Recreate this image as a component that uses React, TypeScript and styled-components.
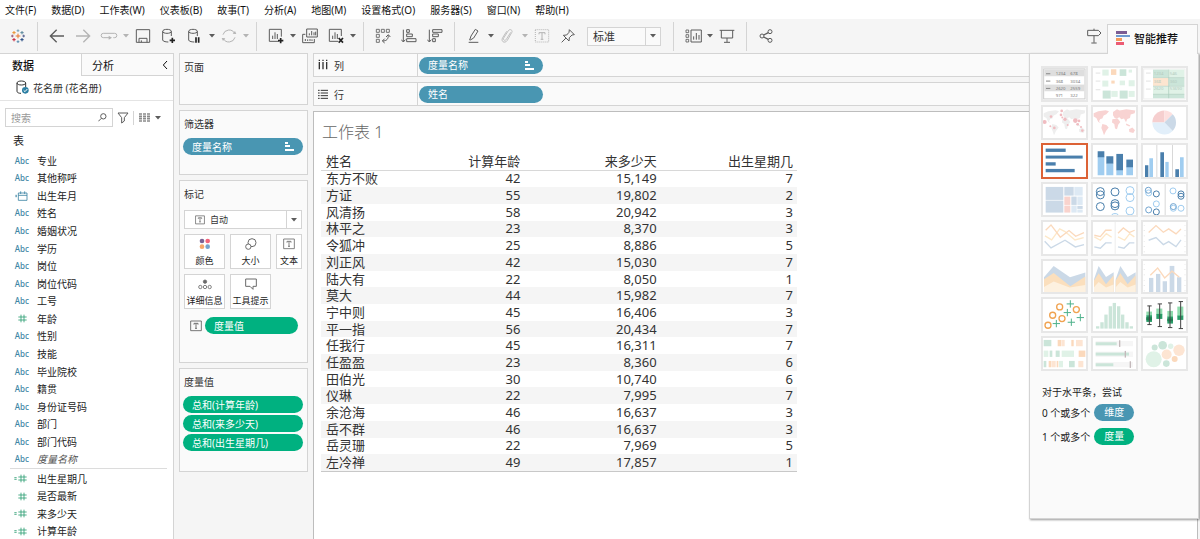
import React from "react";
import styled, { createGlobalStyle, css } from "styled-components";

const color = {
  chrome: "#f5f5f5",
  panel: "#fafafa",
  line: "#d4d4d4",
  text: "#333333",
  icon: "#5c5c5c",
  muted: "#b4b4b4",
  blue: "#4996b2",
  green: "#00b180",
};

const Global = createGlobalStyle`
  * { box-sizing: border-box; }
  body { margin: 0; background: #fff; }
  body, button, input, select {
    font-family: "Noto Sans", "Noto Sans CJK SC", sans-serif;
    font-size: 10px;
    color: ${color.text};
  }
  button { padding: 0; border: 0; background: none; cursor: pointer; }
  ul { list-style: none; margin: 0; padding: 0; }
  h1, h2, p { margin: 0; font-weight: 400; }
  svg { display: block; flex: none; }
`;

const Shell = styled.div`
  display: flex;
  flex-direction: column;
  height: 100vh;
  overflow: hidden;
`;

/* ---------- menu bar ---------- */

const MenuBar = styled.nav`
  display: flex;
  gap: 15px;
  height: 19px;
  padding-left: 5px;
  flex: none;
`;

const MenuButton = styled.button`
  line-height: 20px;
  color: #111;
  white-space: nowrap;
`;

/* ---------- toolbar ---------- */

const Toolbar = styled.div`
  display: flex;
  align-items: center;
  height: 34px;
  padding: 0 2px 0 5px;
  background: ${color.chrome};
  flex: none;
`;

const ToolButton = styled.button<{ $off?: boolean }>`
  display: flex;
  align-items: center;
  justify-content: center;
  width: 26px;
  height: 26px;
  flex: none;
  color: ${(p) => (p.$off ? color.muted : color.icon)};
`;

const CaretButton = styled(ToolButton)`
  width: 8px;
`;

const Separator = styled.span`
  width: 1px;
  height: 29px;
  margin: 0 6px;
  background: ${color.line};
  flex: none;
`;

const Spacer = styled.span`
  flex: 1;
`;

const FitField = styled.label`
  display: flex;
  align-items: center;
  width: 74px;
  height: 19px;
  margin: 0 6px;
  border: 1px solid ${color.line};
  background: ${color.panel};
  flex: none;
`;

const PlainSelect = styled.select`
  flex: 1;
  min-width: 0;
  height: 17px;
  padding: 0 0 0 5px;
  border: 0;
  background: none;
  appearance: none;
  font-size: 11px;
`;

const SelectArrow = styled.span`
  display: flex;
  align-items: center;
  justify-content: center;
  align-self: stretch;
  width: 15px;
  border-left: 1px solid ${color.line};
  color: ${color.icon};
`;

const ShowMeTab = styled.button`
  position: relative;
  z-index: 2;
  display: flex;
  align-items: center;
  align-self: flex-end;
  gap: 4px;
  width: 91px;
  height: 30px;
  margin-bottom: -1px;
  padding: 0 0 4px 8px;
  border: 1px solid ${color.line};
  border-bottom: 0;
  background: ${color.panel};
  font-size: 11px;
  font-weight: 500;
  color: #111;
`;

/* ---------- body ---------- */

const Body = styled.div`
  position: relative;
  display: flex;
  flex: 1;
  min-height: 0;
  background: ${color.chrome};
`;

const Sidebar = styled.aside`
  width: 174px;
  flex: none;
  overflow: hidden;
  border: solid ${color.line};
  border-width: 1px 1px 0 0;
  background: #fff;
`;

const TabRow = styled.div`
  display: flex;
  height: 22px;
`;

const SideTab = styled.button<{ $active?: boolean }>`
  display: flex;
  align-items: center;
  justify-content: space-between;
  padding: 0 5px 0 12px;
  font-size: 11px;
  color: #111;
  ${(p) =>
    p.$active
      ? css`
          width: 81px;
          font-weight: 500;
        `
      : css`
          flex: 1;
          padding-left: 10px;
          border: solid ${color.line};
          border-width: 0 0 1px 1px;
          background: ${color.panel};
        `}
`;

const SourceRow = styled.button`
  display: flex;
  align-items: center;
  gap: 4px;
  width: 100%;
  height: 25px;
  padding: 0 0 2px 16px;
  border-bottom: 1px solid #e4e4e4;
`;

const SearchRow = styled.div`
  display: flex;
  align-items: center;
  gap: 4px;
  height: 19px;
  margin: 7px 0 0 5px;
`;

const SearchBox = styled.label`
  display: flex;
  align-items: center;
  width: 108px;
  height: 19px;
  padding-right: 5px;
  border: 1px solid ${color.line};
  color: ${color.icon};
`;

const SearchInput = styled.input`
  flex: 1;
  min-width: 0;
  height: 17px;
  padding: 0 5px;
  border: 0;
  outline: 0;
  background: none;
  &::placeholder { color: #999; }
`;

const SmallButton = styled.button<{ $ruled?: boolean }>`
  display: flex;
  align-items: center;
  height: 14px;
  color: ${color.icon};
  ${(p) =>
    p.$ruled &&
    css`
      padding-left: 5px;
      border-left: 1px solid ${color.line};
      color: #8a8a8a;
    `}
`;

const GroupTitle = styled.h2`
  height: 25px;
  padding-left: 13px;
  font-size: 11px;
  line-height: 28px;
  color: #222;
`;

const FieldList = styled.ul<{ $height: number }>`
  display: flex;
  flex-direction: column;
  height: ${(p) => p.$height}px;
`;

const FieldItem = styled.li<{ $italic?: boolean }>`
  display: flex;
  align-items: center;
  flex: 1;
  min-height: 0;
  line-height: 16px;
  color: ${(p) => (p.$italic ? "#555" : "#222")};
  font-style: ${(p) => (p.$italic ? "italic" : "normal")};
`;

const FieldMark = styled.span<{ $measure?: boolean }>`
  display: flex;
  justify-content: flex-end;
  width: 37px;
  padding-right: ${(p) => (p.$measure ? 10 : 8)}px;
  font-size: 8px;
  font-style: normal;
  font-weight: 500;
  color: ${(p) => (p.$measure ? "#2f9f74" : "#3f86a5")};
`;

const FieldRule = styled.hr`
  height: 1px;
  margin: 0 6px 1px 10px;
  border: 0;
  background: #dcdcdc;
`;

/* ---------- cards ---------- */

const CardColumn = styled.div`
  display: flex;
  flex-direction: column;
  gap: 5px;
  width: 139px;
  padding: 0 5px;
  flex: none;
`;

const Card = styled.section<{ $min: number }>`
  min-height: ${(p) => p.$min}px;
  padding: 6px 4px 0 3px;
  border: 1px solid ${color.line};
  background: ${color.panel};
`;

const CardTitle = styled.h2`
  margin-bottom: 7px;
  padding-left: 1px;
  font-size: 10px;
  line-height: 14px;
`;

const PillStack = styled.div`
  display: flex;
  flex-direction: column;
  gap: 2px;
`;

const Pill = styled.button<{ $measure?: boolean; $width?: number }>`
  display: flex;
  align-items: center;
  justify-content: space-between;
  width: ${(p) => (p.$width ? `${p.$width}px` : "100%")};
  height: 17px;
  padding: 0 9px;
  border-radius: 9px;
  line-height: 16px;
  color: #fff;
  background: ${(p) => (p.$measure ? color.green : color.blue)};
`;

const Marks = styled.div`
  display: flex;
  flex-direction: column;
  gap: 5px;
  margin: 9px 1px 0;
`;

const MarkType = styled.label`
  display: flex;
  align-items: center;
  height: 19px;
  padding-left: 10px;
  border: 1px solid ${color.line};
  background: #fff;
  color: ${color.icon};
`;

const MarkTypeSelect = styled(PlainSelect)`
  font-size: 9px;
`;

const MarkGrid = styled.div`
  display: grid;
  grid-template-columns: 41px 41px 1fr;
  gap: 5px;
`;

const MarkButton = styled.button`
  display: flex;
  flex-direction: column;
  align-items: center;
  justify-content: space-between;
  height: 35px;
  padding: 3px 0 1px;
  border: 1px solid ${color.line};
  background: #fff;
  font-size: 9px;
  line-height: 12px;
  white-space: nowrap;
  color: #222;

  svg { color: #6a6a6a; }
`;

const MarkPillRow = styled.div`
  display: flex;
  align-items: center;
  gap: 3px;
  padding: 3px 0 0 6px;
  color: ${color.icon};
`;

/* ---------- shelves and sheet ---------- */

const Main = styled.main`
  display: flex;
  flex-direction: column;
  gap: 5px;
  flex: 1;
  min-width: 0;
  margin-right: 2px;
`;

const Shelf = styled.div`
  display: flex;
  align-items: center;
  height: 24px;
  border: 1px solid ${color.line};
  background: ${color.panel};
  flex: none;
`;

const ShelfLabel = styled.div`
  display: flex;
  align-items: center;
  align-self: stretch;
  gap: 6px;
  width: 104px;
  margin-right: 1px;
  padding-left: 4px;
  border-right: 1px solid ${color.line};
`;

const Sheet = styled.div`
  flex: 1;
  padding: 8px 7px 0;
  border: 1px solid #bdbdbd;
  border-bottom: 0;
  background: #fff;
`;

const SheetTitle = styled.h1`
  padding-left: 1px;
  font-size: 16px;
  line-height: 24px;
  font-weight: 300;
  color: #666;
`;

const DataTable = styled.table`
  width: 476px;
  height: 318px;
  margin-top: 10px;
  border-collapse: collapse;
  table-layout: fixed;
  border-bottom: 1px solid #c8c8c8;
  font-size: 13px;
  line-height: 15px;

  thead tr { height: 16px; border-bottom: 1px solid #d8d8d8; }
  tbody tr:nth-child(even) { background: #f5f5f5; }
`;

const Cell = styled.td`
  padding: 0 4px;
  text-align: right;
`;

const HeadCell = styled.th`
  padding: 0 4px;
  text-align: right;
  font-weight: 400;
  &:first-child { width: 67px; padding-left: 5px; text-align: left; }
`;

const RowHead = styled.th`
  padding: 0 0 0 5px;
  text-align: left;
  font-weight: 400;
  white-space: nowrap;
`;

/* ---------- recommendation panel ---------- */

const ShowMePanel = styled.aside`
  position: absolute;
  top: 0;
  right: 1px;
  width: 170px;
  padding: 12px 11px 73px;
  border: 1px solid ${color.line};
  background: ${color.panel};
  box-shadow: 1px 1px 2px rgba(0, 0, 0, 0.4);
`;

const ChartGrid = styled.div`
  display: grid;
  grid-template-columns: repeat(3, 47px);
  grid-template-rows: repeat(8, 1fr);
  gap: 3px;
  height: 305px;
  margin-bottom: 12px;
`;

const ChartButton = styled.button<{ $selected?: boolean }>`
  display: flex;
  min-height: 0;
  border: 2px solid ${(p) => (p.$selected ? "#dc6236" : "#e7e7e7")};
  background: #fff;

  svg { width: 100%; height: 100%; }
`;

const Hint = styled.p`
  line-height: 18px;
  margin-bottom: 3px;
  padding-left: 1px;
  color: #222;
`;

const HintRow = styled.p`
  display: flex;
  align-items: center;
  gap: 4px;
  height: 17px;
  margin-bottom: 7px;
  padding-left: 1px;
  white-space: nowrap;
  color: #222;
  &:last-child { margin-bottom: 0; }
`;

const Tag = styled.span<{ $measure?: boolean }>`
  width: 40px;
  height: 17px;
  border-radius: 9px;
  line-height: 16px;
  text-align: center;
  color: #fff;
  background: ${(p) => (p.$measure ? color.green : color.blue)};
`;

/* ---------- icons ---------- */

type IconProps = { w?: number; h?: number; sw?: number; children: React.ReactNode };

/* Line icons are drawn on a grid three units to the pixel. */
const Icon = ({ w = 16, h = 16, sw = 3, children }: IconProps) => (
  <svg width={w} height={h} viewBox={`0 0 ${w * 3} ${h * 3}`} fill="none" stroke="currentColor" strokeWidth={sw}>
    {children}
  </svg>
);

const Caret = () => (
  <svg width="6" height="4" viewBox="0 0 6 4" fill="currentColor">
    <path d="M0 0h6L3 3.5z" />
  </svg>
);

const plus = (x: number, y: number, r: number) => `M${x - r} ${y}h${2 * r}M${x} ${y - r}v${2 * r}`;

const Logo = () => (
  <Icon sw={3}>
    <path d={plus(24, 24, 7)} stroke="#e8762d" />
    <path d={plus(24, 8, 4)} stroke="#7aa3b5" />
    <path d={plus(24, 41, 4)} stroke="#5c8fb0" />
    <path d={plus(7, 24, 4)} stroke="#9a5c7c" />
    <path d={plus(41, 24, 4)} stroke="#5b6591" />
    <path d={plus(12, 14, 5)} stroke="#eb912c" />
    <path d={plus(36, 14, 5)} stroke="#59879b" />
    <path d={plus(12, 35, 5)} stroke="#c72037" />
    <path d={plus(36, 35, 5)} stroke="#1f447e" />
  </Icon>
);

const Back = () => <Icon sw={4}><path d="M45 24H5M23 5L4 24l19 19" /></Icon>;
const Forward = () => <Icon sw={4}><path d="M3 24h40M25 5l19 19-19 19" /></Icon>;
const Replay = () => (
  <Icon w={18}><path d="M40 29h4a6 6 0 0 0 0-13H10a6 6 0 0 0 0 13h20" /><path d="M26 23l10 6-10 6z" fill="currentColor" stroke="none" /></Icon>
);
const Save = () => (
  <Icon><path d="M4 5h40v38H4zM12 43V31h24v12M19 43v-6" /></Icon>
);
const cylinder = "M5 10v26c0 5 13 6 17 6M31 10v14M5 10c0-8 26-8 26 0s-26 8-26 0";
const DbPlus = () => <Icon><path d={cylinder} /><path d={plus(34, 37, 8)} stroke="#222" strokeWidth="5" /></Icon>;
const DbPause = () => <Icon><path d={cylinder} /><path d="M27 28v16M35 28v16" stroke="#222" strokeWidth="5" /></Icon>;
const Refresh = () => (
  <Icon>
    <path d="M6 20A19 19 0 0 1 41 16M42 28A19 19 0 0 1 7 32" />
    <path d="M35 17l11 1-4-9zM13 31L2 30l4 9z" fill="currentColor" stroke="none" />
  </Icon>
);
const bars = "M14 33V23M21 33V13M28 33V18";
const ChartPlus = () => (
  <Icon><path d="M32 40H4V4h36v22" /><path d={bars} /><path d={plus(38, 38, 8)} stroke="#222" strokeWidth="5" /></Icon>
);
const ChartClear = () => (
  <Icon><path d="M30 40H4V4h36v20" /><path d={bars} /><path d="M32 30l13 14M45 30L32 44" stroke="#222" strokeWidth="5" /></Icon>
);
const ChartCopy = () => (
  <Icon><path d="M14 3h32v24H14zM22 22v-6M29 22V9M36 22v-9M41 22V11" /><path d="M10 19H2v25h35v-11M10 39v-6M17 39v-5M24 39v-6M30 39v-5" /></Icon>
);
const Swap = () => (
  <Icon>
    <path d="M4 4h9v9H4zM19 4h9v9h-9zM34 4h9v9h-9zM4 19h9v9H4zM4 34h9v9H4z" strokeWidth="2.5" />
    <path d="M23 39c12 0 17-6 17-17M29 32l-7 7 7 6M33 27l7-7 6 7" />
  </Icon>
);
const SortUp = () => (
  <Icon><path d="M7 5v36M1 35l6 7 6-7M17 5h8v8h-8zM17 18h17v8H17zM17 32h28v9H17z" /></Icon>
);
const SortDown = () => (
  <Icon><path d="M7 5v36M1 35l6 7 6-7M17 5h28v8H17zM17 18h17v8H17zM17 32h8v9h-8z" /></Icon>
);
const Pen = () => (
  <Icon><path d="M11 36l4-12L28 4l8 5-13 21-10 6zM8 43h29" /></Icon>
);
const Clip = () => (
  <Icon><path d="M32 13L19 34c-4 6-11 2-8-4L25 8c5-7 15-1 10 6L22 37c-7 11-21 4-14-8L20 10" strokeWidth="2.5" /></Icon>
);
const TextFrame = () => (
  <Icon><path d="M4 5h40v37H4z" strokeDasharray="3 3" /><path d="M15 19v-5h18v5M24 14v20M20 34h8" /></Icon>
);
const Pin = () => (
  <Icon><path d="M28 5l15 15-7 1-8 8-1 10L10 22l10-1 7-8zM18 30L5 43" /></Icon>
);
const Viewer = () => (
  <Icon w={17}><path d="M18 6h31v36H18zM26 35V25M34 35V15M42 35V21" /><path d="M3 6h8v8H3zM3 20h8v8H3zM3 34h8v8H3z" strokeWidth="2.5" /></Icon>
);
const Present = () => <Icon><path d="M2 7h44M7 7v23h34V7M24 30v12M15 43h18" /></Icon>;
const Share = () => (
  <Icon><circle cx="12" cy="24" r="6" /><circle cx="36" cy="11" r="6" /><circle cx="36" cy="37" r="6" /><path d="M17 21l14-7M17 27l14 7" strokeWidth="4" /></Icon>
);
const Signpost = () => <Icon><path d="M5 7h32l8 8-8 8H5zM24 2v5M24 23v21M16 45h16" /></Icon>;
const ShowMeLogo = () => (
  <svg width="14" height="14" viewBox="0 0 14 14">
    <path d="M0 0h11v3H0z" fill="#7b5d94" /><path d="M0 4h14v2H0z" fill="#6f9bd1" />
    <path d="M0 7h6v3H0z" fill="#f39a5b" /><path d="M0 11h8v3H0z" fill="#ec5b74" />
  </svg>
);
const DataSource = () => (
  <Icon w={13} h={14}>
    <path d="M3 9v25c0 4 6 6 12 6M29 9v12M3 9C3 1 29 1 29 9s-26 8-26 0" />
    <circle cx="28" cy="31" r="10" fill="#2c7fa3" stroke="none" /><path d="M23 31l4 4 7-8" stroke="#fff" />
  </Icon>
);
const Search = () => <Icon w={9} h={9}><circle cx="16" cy="10" r="8" /><path d="M10 16L1 25" /></Icon>;
const Funnel = () => <Icon w={12} h={12}><path d="M3 3h30L22 17v10l-8 6V17z" /></Icon>;
const ListGrid = () => (
  <Icon w={11} h={9}><path d="M0 3h33M0 10h33M0 17h33M0 24h33" strokeWidth="5" strokeDasharray="9 3" /></Icon>
);
const ChevronLeft = () => <Icon w={6} h={10}><path d="M15 3L4 15l11 12" /></Icon>;
const Hash = () => <Icon w={9} h={9} sw={2.5}><path d="M9 2v23M18 2v23M1 9h25M1 18h25" /></Icon>;
const CalcHash = () => <Icon w={13} h={9} sw={2.5}><path d="M21 2v23M30 2v23M13 9h25M13 18h25" /><path d="M1 11h7M1 16h7" /></Icon>;
const Calendar = () => (
  <Icon w={14} h={10} sw={2.5}><path d="M10 6h26v22H10zM10 13h26M17 1v8M29 1v8" /><path d="M1 13h5M1 17h5" /></Icon>
);
const TextMark = ({ size = 12 }: { size?: number }) => (
  <svg width={size} height={size} viewBox="0 0 36 36" fill="none" stroke="currentColor" strokeWidth="2.5">
    <path d="M2 3h32v29H2zM12 14v-4h12v4M18 10v15M15 25h6" />
  </svg>
);
const Dots = () => (
  <svg width="12" height="12" viewBox="0 0 36 36">
    <circle cx="9" cy="9" r="7" fill="#7b6294" /><circle cx="26" cy="9" r="7" fill="#f2637b" />
    <circle cx="9" cy="26" r="7" fill="#f5a66a" /><circle cx="26" cy="26" r="7" fill="#77a2cb" />
  </svg>
);
const Size = () => <Icon w={12} h={12}><circle cx="21" cy="14" r="12" /><circle cx="10" cy="26" r="8" fill="#fff" /></Icon>;
const Detail = () => (
  <Icon w={14} h={12} sw={2.5}><circle cx="21" cy="11" r="5" fill="currentColor" /><circle cx="7" cy="27" r="5" /><circle cx="21" cy="27" r="5" /><circle cx="35" cy="27" r="5" /></Icon>
);
const Tooltip = () => <Icon w={12} h={12}><path d="M2 3h32v22H24v9l-9-9H2z" /></Icon>;
const SortMark = () => (
  <svg width="9" height="9" viewBox="0 0 9 9" fill="#fff"><path d="M0 0h3v2H0zM0 3h5v2H0zM0 7h9v2H0z" /></svg>
);
const ColumnsIcon = () => (
  <Icon w={10} h={12} sw={4}><path d="M4 2v4M15 2v4M26 2v4M4 9v22M15 9v22M26 9v22" /></Icon>
);
const RowsIcon = () => (
  <Icon w={10} h={10} sw={4}><path d="M0 4h5M0 12h5M0 20h5M0 28h5M8 4h22M8 12h22M8 20h22M8 28h22" strokeWidth="3" /></Icon>
);

/* ---------- chart thumbnails ---------- */

const R = ({ f, d }: { f: string; d: number[][] }) => (
  <g fill={f}>{d.map(([x, y, w, h], i) => <rect key={i} x={x} y={y} width={w} height={h} />)}</g>
);
const C = ({ s, r, d, w = 3 }: { s: string; r: number; d: number[][]; w?: number }) => (
  <g stroke={s} strokeWidth={w} fill="none">{d.map(([x, y], i) => <circle key={i} cx={x} cy={y} r={r} />)}</g>
);
const L = ({ s, d, w = 3 }: { s: string; d: string; w?: number }) => <path d={d} stroke={s} strokeWidth={w} fill="none" />;

const pb = "#cbd9e7", po = "#fbd9bc", py = "#fde8c9", pg = "#cbe5d9", plg = "#e0f2e7", lb = "#a0cdf0", db = "#4a7fac";

const continents =
  "M8 24l14-6 22-3 10 3-8 9-8 4-4 9-6 1-4 7 5 5-7-3-6-12-8-4zM34 56l12 3 7 8-8 10-6 13-4-12-4-10zM66 20l12-8 8 4 20-4 27 4-2 8-12 4-2 10-8 3-4 10-6-11-8 2-6-6-8 4-6-2-5-8zM64 42l16-2 8 10-6 8-4 14-6-2-2-14-7-4zM114 72l10-5 8 8-5 8-12-3zM106 55l12 6-3 3-10-5z";

const numbers = (rows: string[][], fill: string, x: number[]) =>
  rows.map((r, i) =>
    r.map((t, j) => (
      <text key={`${i}${j}`} x={x[j]} y={27 + i * 22} fontSize="13" fill={fill}>{t}</text>
    )),
  );

const charts: { name: string; art: React.ReactNode }[] = [
  { name: "文本表", art: <>
    <rect x="8" y="8" width="124" height="90" fill="#fff" stroke="#ccc" strokeWidth="3" />
    <R f="#dedede" d={[[10, 10, 120, 20], [10, 55, 120, 20]]} />
    <R f="#888" d={[[15, 21, 13, 3], [15, 43, 13, 3], [15, 65, 13, 3]]} />
    {numbers([["1234", "678"], ["368", "3034"], ["2620", "2559"], ["971", "322"]], "#777", [44, 88])}
  </> },
  { name: "压力图", art: <>
    <R f="#e2e2e2" d={[[14, 19, 14, 3], [14, 43, 14, 3], [14, 69, 14, 3]]} />
    <R f={plg} d={[[34, 10, 19, 18], [113, 10, 10, 9], [34, 43, 18, 18], [86, 43, 16, 14], [113, 42, 18, 18], [61, 74, 19, 18], [113, 74, 18, 18]]} />
    <R f={pg} d={[[86, 9, 20, 20], [35, 73, 24, 24], [86, 73, 24, 24]]} />
    <R f={po} d={[[60, 9, 16, 17], [61, 43, 10, 9]]} />
  </> },
  { name: "突出显示表", art: <>
    <rect x="8" y="8" width="124" height="90" fill="#fff" stroke="#eee" strokeWidth="3" />
    <R f="#e2e2e2" d={[[15, 19, 14, 3], [15, 43, 14, 3], [15, 67, 14, 3]]} />
    <R f={pg} d={[[36, 10, 46, 23], [83, 35, 47, 24], [36, 84, 94, 12]]} />
    <R f={plg} d={[[83, 10, 47, 23], [36, 61, 94, 22]]} /><R f="#fde5d0" d={[[36, 35, 46, 24]]} />
    <L s="#a9cbbb" w={2} d="M36 34h94M36 60h94M36 84h94M83 10v86" />
    {numbers([["1234", "546"], ["368", "360"], ["2620", "53690"]], "#b5cbbf", [38, 86])}
  </> },
  { name: "符号地图", art: <>
    <path d={continents} fill="#eeeeee" />
    <g fill="#f0bcc1">{[[11, 50, 6], [30, 34, 4], [60, 29, 4], [62, 17, 4], [72, 42, 5], [64, 37, 3], [80, 59, 3], [103, 46, 7], [114, 47, 4], [110, 57, 4], [28, 63, 3], [40, 68, 4], [120, 65, 3], [124, 76, 4]].map(([x, y, r], i) => <circle key={i} cx={x} cy={y} r={r} />)}</g>
  </> },
  { name: "地图", art: <path d={continents} fill="#f8d3d2" /> },
  { name: "饼图", art: <>
    <path d="M70 52L34 52A36 36 0 0 1 70 16z" fill="#f6cfcf" /><path d="M70 52V16A36 36 0 0 1 95 27z" fill="#fde0df" />
    <path d="M70 52L95 27A36 36 0 0 1 95 77z" fill={pb} /><path d="M70 52L95 77A36 36 0 0 1 34 52z" fill="#e2effa" />
  </> },
  { name: "水平条", art: <R f={db} d={[[14, 16, 60, 10], [14, 37, 111, 9], [14, 57, 30, 10], [14, 77, 87, 10]]} /> },
  { name: "堆叠条", art: <>
    <R f={lb} d={[[20, 40, 20, 56], [46, 60, 21, 36], [76, 80, 20, 16], [106, 70, 20, 26]]} />
    <R f={db} d={[[20, 24, 20, 18], [46, 39, 21, 22], [76, 32, 20, 49], [106, 49, 20, 23]]} />
  </> },
  { name: "并排条", art: <>
    <R f="#d8d8d8" d={[[46, 0, 3, 105], [93, 0, 3, 105]]} />
    <R f={db} d={[[12, 66, 10, 36], [58, 27, 11, 75], [103, 78, 11, 24]]} />
    <R f={lb} d={[[25, 45, 11, 57], [73, 56, 10, 46], [117, 42, 11, 60]]} />
  </> },
  { name: "树状图", art: <>
    <R f={pb} d={[[14, 14, 53, 39], [14, 55, 53, 36], [70, 14, 28, 26], [91, 43, 16, 25], [109, 71, 16, 9]]} />
    <R f="#dde9f4" d={[[100, 14, 25, 26], [109, 43, 16, 25], [91, 70, 16, 21], [109, 82, 16, 9]]} />
    <R f="#f9d3cd" d={[[70, 43, 18, 25], [70, 70, 18, 21]]} />
  </> },
  { name: "圆视图", art: <>
    <C s={lb} r={12} d={[[117, 25], [117, 46], [117, 86], [72, 106]]} />
    <C s={db} r={12} d={[[28, 38], [28, 73], [72, 29], [72, 64], [72, 71], [28, 28]]} />
  </> },
  { name: "并排圆", art: <>
    <R f="#d8d8d8" d={[[71, 0, 3, 105]]} />
    <C s={lb} r={9} d={[[23, 32], [46, 65], [96, 26], [120, 78], [97, 78]]} />
    <C s={db} r={9} d={[[46, 35], [46, 89], [120, 42], [120, 35]]} />
    <C s="#72a4cf" r={9} d={[[22, 24], [23, 83], [97, 73]]} />
  </> },
  { name: "线(连续)", art: <>
    <L s={py} w={4} d="M12 47l20 12 24-33 16 8 30 25 26-7" /><L s={po} w={4} d="M14 30l16-16 28 37 26-20 20 17 25-11" />
    <L s={pb} w={4} d="M11 63l19 20 42-23 31 20 26-7" />
  </> },
  { name: "线(离散)", art: <>
    <R f="#eeeeee" d={[[71, 5, 3, 96]]} />
    <L s={py} w={4} d="M10 50l18 10 18-20 16 11M81 50l20 10 15-20 14 10" />
    <L s={po} w={4} d="M10 45l18 4 16-19h18M81 39l16-16 18 14 16-7" />
    <L s={pb} w={4} d="M10 80l18 4 16-16h18M81 80l18 4 16-16h15" />
  </> },
  { name: "双线", art: <>
    <L s={po} w={4} d="M23 37l22-21 22 20 16-10 22 15 15-15" /><L s={pb} w={4} d="M23 60l22-8 22 21 16-9 22 15 15-20" />
    <path d="M10 14v88M132 14v88" stroke="#e4e4e4" strokeWidth="4" strokeDasharray="2 14" />
  </> },
  { name: "面积图(连续)", art: <>
    <path d="M9 54L38 20l49 34 46-14v59H9z" fill={pb} /><path d="M9 60l29-19 50 40 45-29v47H9z" fill="#fbdfbd" />
    <path d="M9 83l29-16 48 18 47-8v22H9z" fill="#fdf1e0" />
  </> },
  { name: "面积图(离散)", art: <>
    <path d="M9 60l14-40 22 33 23-14v60H9zM74 60l14-40 22 33 24-14v60H74z" fill={pb} />
    <path d="M9 64l14-22 22 33 23-27v51H9zM74 64l14-22 22 33 24-27v51H74z" fill="#fbdfbd" />
    <path d="M9 84l14-16 22 17 23-9v23H9zM74 84l14-16 22 17 24-9v23H74z" fill="#fdf1e0" />
  </> },
  { name: "双组合", art: <>
    <R f={pb} d={[[24, 56, 13, 43], [45, 44, 13, 55], [65, 66, 13, 33], [86, 20, 14, 79], [108, 54, 13, 45]]} />
    <L s={po} w={4} d="M28 48l22-22 21 30 22-20 22 18" />
    <path d="M10 14v88M132 14v88" stroke="#e4e4e4" strokeWidth="4" strokeDasharray="2 14" />
  </> },
  { name: "散点图", art: <>
    <C s="#f0a351" r={9} w={4} d={[[56, 29], [35, 54], [21, 84], [63, 64], [106, 37]]} />
    <L s="#4db18b" w={3} d={[[88, 20], [79, 46], [46, 79], [91, 75], [118, 61]].map(([x, y]) => plus(x, y, 11)).join("")} />
  </> },
  { name: "直方图", art: <R f={pg} d={[[15, 87, 10, 7], [28, 75, 10, 19], [40, 52, 10, 42], [53, 27, 10, 67], [65, 17, 10, 77], [78, 27, 10, 67], [90, 52, 10, 42], [103, 75, 10, 19], [116, 87, 10, 7]]} /> },
  { name: "盒须图", art: <>
    <R f="#8fdcae" d={[[16, 43, 17, 12], [46, 34, 18, 18], [79, 41, 17, 19], [109, 28, 18, 29]]} />
    <R f="#2b9e6a" d={[[16, 54, 17, 20], [46, 50, 18, 15], [79, 58, 17, 21], [109, 55, 18, 13]]} />
    <R f="#1f7f52" d={[[16, 60, 17, 9], [79, 64, 17, 8]]} />
    <L s="#444" d="M25 26v56M19 26h13M19 82h13M56 20v68M50 20h13M50 88h13M87 17v73M81 17h13M81 91h13M119 13v80M113 13h13M113 94h13" />
  </> },
  { name: "甘特图", art: <>
    <R f={pg} d={[[8, 11, 23, 19], [26, 43, 8, 19], [44, 43, 12, 19], [84, 74, 17, 19], [8, 74, 8, 19]]} />
    <R f={plg} d={[[8, 43, 14, 19], [62, 43, 37, 19], [54, 74, 12, 19]]} />
    <R f={po} d={[[50, 11, 10, 19], [91, 11, 7, 19], [113, 43, 20, 19], [23, 74, 7, 19], [47, 74, 5, 19]]} />
    <R f="#fde5d3" d={[[61, 11, 10, 19], [105, 11, 20, 19], [31, 74, 13, 19], [112, 74, 15, 19]]} />
  </> },
  { name: "标靶图", art: <>
    <R f="#f6f6f6" d={[[14, 14, 112, 16], [14, 46, 112, 16], [14, 77, 112, 16]]} />
    <R f={pg} d={[[14, 18, 63, 9], [14, 49, 100, 9], [14, 81, 53, 9]]} /><R f="#c4b9bb" d={[[84, 12, 4, 20], [101, 44, 4, 20], [116, 75, 4, 20]]} />
  </> },
  { name: "填充气泡图", art: <>
    <g fill={plg}><circle cx="38" cy="69" r="24" /><circle cx="89" cy="30" r="8" /></g>
    <g fill={pg}><circle cx="41" cy="34" r="9" /><circle cx="65" cy="27" r="13" /><circle cx="76" cy="82" r="10" /></g>
    <g fill="#fde5d3"><circle cx="77" cy="55" r="15" /><circle cx="114" cy="42" r="17" /></g><circle cx="101" cy="68" r="9" fill={po} />
  </> },
];

/* ---------- data ---------- */

const menus = ["文件(F)", "数据(D)", "工作表(W)", "仪表板(B)", "故事(T)", "分析(A)", "地图(M)", "设置格式(O)", "服务器(S)", "窗口(N)", "帮助(H)"];

type Kind = "text" | "date" | "number" | "calc";
type Field = [string, Kind];

const dimensions: Field[] = [
  ["专业", "text"], ["其他称呼", "text"], ["出生年月", "date"], ["姓名", "text"], ["婚姻状况", "text"],
  ["学历", "text"], ["岗位", "text"], ["岗位代码", "text"], ["工号", "text"], ["年龄", "number"],
  ["性别", "text"], ["技能", "text"], ["毕业院校", "text"], ["籍贯", "text"], ["身份证号码", "text"],
  ["部门", "text"], ["部门代码", "text"], ["度量名称", "text"],
];

const measures: Field[] = [["出生星期几", "calc"], ["是否最新", "number"], ["来多少天", "calc"], ["计算年龄", "calc"]];

const people: [string, number, string, number][] = [
  ["东方不败", 42, "15,149", 7], ["方证", 55, "19,802", 2], ["风清扬", 58, "20,942", 3],
  ["林平之", 23, "8,370", 3], ["令狐冲", 25, "8,886", 5], ["刘正风", 42, "15,030", 7],
  ["陆大有", 22, "8,050", 1], ["莫大", 44, "15,982", 7], ["宁中则", 45, "16,406", 3],
  ["平一指", 56, "20,434", 7], ["任我行", 45, "16,311", 7], ["任盈盈", 23, "8,360", 6],
  ["田伯光", 30, "10,740", 6], ["仪琳", 22, "7,995", 7], ["余沧海", 46, "16,637", 3],
  ["岳不群", 46, "16,637", 3], ["岳灵珊", 22, "7,969", 5], ["左冷禅", 49, "17,857", 1],
];

const marks: [string, React.ReactNode][] = [
  ["颜色", <Dots />], ["大小", <Size />], ["文本", <TextMark />], ["详细信息", <Detail />], ["工具提示", <Tooltip />],
];

const kindMark: Record<Kind, React.ReactNode> = {
  text: "Abc",
  date: <Calendar />,
  number: <Hash />,
  calc: <CalcHash />,
};

/* ---------- parts ---------- */

const Tool = ({ label, off, children }: { label: string; off?: boolean; children: React.ReactNode }) => (
  <ToolButton $off={off} aria-label={label}>{children}</ToolButton>
);
const More = ({ label, off }: { label: string; off?: boolean }) => (
  <CaretButton $off={off} aria-label={label}><Caret /></CaretButton>
);

const Fields = ({ items, height }: { items: Field[]; height: number }) => (
  <FieldList $height={height}>
    {items.map(([name, kind]) => (
      <FieldItem key={name} $italic={name === "度量名称"}>
        <FieldMark $measure={kind === "number" || kind === "calc"}>{kindMark[kind]}</FieldMark>
        {name}
      </FieldItem>
    ))}
  </FieldList>
);

export default function App() {
  return (
    <Shell>
      <Global />
      <MenuBar>{menus.map((m) => <MenuButton key={m}>{m}</MenuButton>)}</MenuBar>

      <Toolbar role="toolbar">
        <Tool label="起始页"><Logo /></Tool>
        <Separator />
        <Tool label="撤消"><Back /></Tool>
        <Tool label="重做" off><Forward /></Tool>
        <Tool label="重播动画" off><Replay /></Tool>
        <More label="重播选项" off />
        <Tool label="保存"><Save /></Tool>
        <Tool label="新建数据源"><DbPlus /></Tool>
        <Tool label="暂停自动更新"><DbPause /></Tool>
        <More label="自动更新选项" />
        <Tool label="运行更新" off><Refresh /></Tool>
        <More label="更新选项" off />
        <Separator />
        <Tool label="新建工作表"><ChartPlus /></Tool>
        <More label="新建选项" />
        <Tool label="复制工作表"><ChartCopy /></Tool>
        <Tool label="清除工作表"><ChartClear /></Tool>
        <More label="清除选项" />
        <Separator />
        <Tool label="交换行和列"><Swap /></Tool>
        <Tool label="升序排序"><SortUp /></Tool>
        <Tool label="降序排序"><SortDown /></Tool>
        <Separator />
        <Tool label="突出显示"><Pen /></Tool>
        <More label="突出显示选项" />
        <Tool label="组成员" off><Clip /></Tool>
        <More label="分组选项" off />
        <Tool label="显示标记标签" off><TextFrame /></Tool>
        <Tool label="固定轴"><Pin /></Tool>
        <FitField>
          <PlainSelect aria-label="适合" defaultValue="标准">
            <option>标准</option>
            <option>适合宽度</option>
            <option>适合高度</option>
            <option>整个视图</option>
          </PlainSelect>
          <SelectArrow><Caret /></SelectArrow>
        </FitField>
        <Separator />
        <Tool label="显示隐藏卡"><Viewer /></Tool>
        <More label="卡选项" />
        <Tool label="演示模式"><Present /></Tool>
        <Separator />
        <Tool label="共享"><Share /></Tool>
        <Spacer />
        <Tool label="指南"><Signpost /></Tool>
        <ShowMeTab><ShowMeLogo />智能推荐</ShowMeTab>
      </Toolbar>

      <Body>
        <Sidebar>
          <TabRow>
            <SideTab $active>数据</SideTab>
            <SideTab>分析<ChevronLeft /></SideTab>
          </TabRow>
          <SourceRow><DataSource />花名册 (花名册)</SourceRow>
          <SearchRow>
            <SearchBox>
              <SearchInput placeholder="搜索" aria-label="搜索" />
              <Search />
            </SearchBox>
            <SmallButton aria-label="筛选字段"><Funnel /></SmallButton>
            <SmallButton aria-label="视图" $ruled><ListGrid /></SmallButton>
            <CaretButton aria-label="视图选项"><Caret /></CaretButton>
          </SearchRow>
          <GroupTitle>表</GroupTitle>
          <Fields items={dimensions} height={316} />
          <FieldRule />
          <Fields items={measures} height={70} />
        </Sidebar>

        <CardColumn>
          <Card $min={52}><CardTitle>页面</CardTitle></Card>
          <Card $min={65}>
            <CardTitle>筛选器</CardTitle>
            <Pill>度量名称<SortMark /></Pill>
          </Card>
          <Card $min={183}>
            <CardTitle>标记</CardTitle>
            <Marks>
              <MarkType>
                <TextMark size={10} />
                <MarkTypeSelect aria-label="标记类型" defaultValue="自动">
                  <option>自动</option>
                  <option>条形图</option>
                  <option>线</option>
                </MarkTypeSelect>
                <SelectArrow><Caret /></SelectArrow>
              </MarkType>
              <MarkGrid>
                {marks.map(([label, icon]) => <MarkButton key={label}>{icon}{label}</MarkButton>)}
              </MarkGrid>
              <MarkPillRow><TextMark /><Pill $measure $width={93}>度量值</Pill></MarkPillRow>
            </Marks>
          </Card>
          <Card $min={104}>
            <CardTitle>度量值</CardTitle>
            <PillStack>
              <Pill $measure>总和(计算年龄)</Pill>
              <Pill $measure>总和(来多少天)</Pill>
              <Pill $measure>总和(出生星期几)</Pill>
            </PillStack>
          </Card>
        </CardColumn>

        <Main>
          <Shelf>
            <ShelfLabel><ColumnsIcon />列</ShelfLabel>
            <Pill $width={124}>度量名称<SortMark /></Pill>
          </Shelf>
          <Shelf>
            <ShelfLabel><RowsIcon />行</ShelfLabel>
            <Pill $width={124}>姓名</Pill>
          </Shelf>
          <Sheet>
            <SheetTitle>工作表 1</SheetTitle>
            <DataTable>
              <thead>
                <tr>
                  {["姓名", "计算年龄", "来多少天", "出生星期几"].map((h) => (
                    <HeadCell key={h} scope="col">{h}</HeadCell>
                  ))}
                </tr>
              </thead>
              <tbody>
                {people.map(([name, age, days, weekday]) => (
                  <tr key={name}>
                    <RowHead scope="row">{name}</RowHead>
                    <Cell>{age}</Cell>
                    <Cell>{days}</Cell>
                    <Cell>{weekday}</Cell>
                  </tr>
                ))}
              </tbody>
            </DataTable>
          </Sheet>
        </Main>

        <ShowMePanel>
          <ChartGrid>
            {charts.map(({ name, art }) => (
              <ChartButton key={name} aria-label={name} $selected={name === "水平条"}>
                <svg viewBox="6 6 129 93">{art}</svg>
              </ChartButton>
            ))}
          </ChartGrid>
          <Hint>对于水平条，尝试</Hint>
          <HintRow>0 个或多个 <Tag>维度</Tag></HintRow>
          <HintRow>1 个或多个 <Tag $measure>度量</Tag></HintRow>
        </ShowMePanel>
      </Body>
    </Shell>
  );
}
